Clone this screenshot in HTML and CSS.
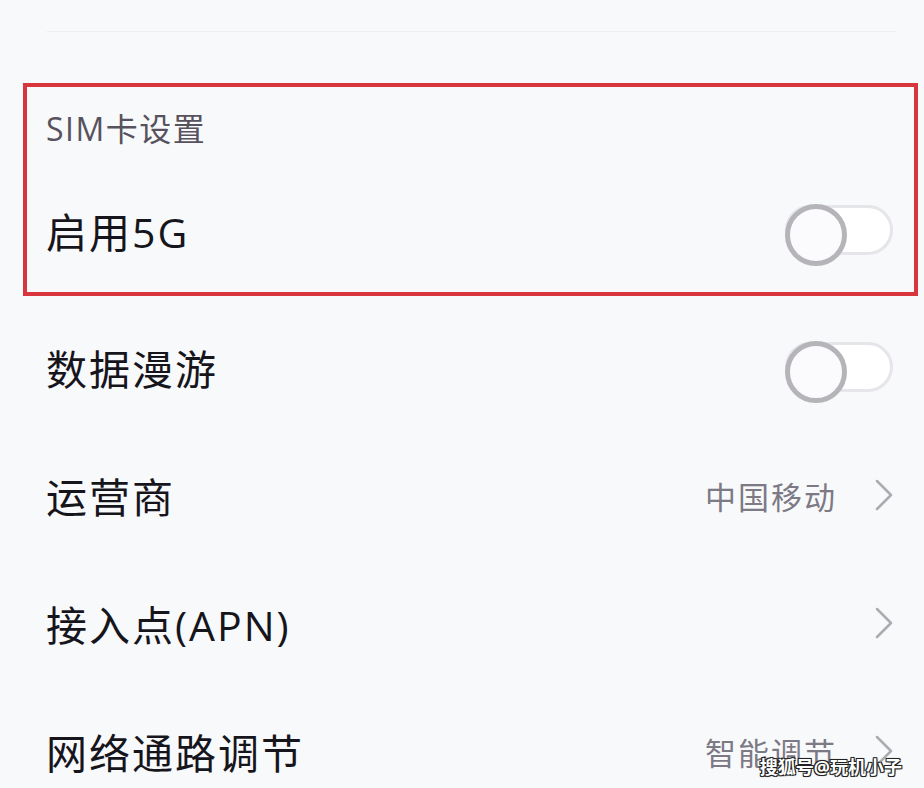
FILE: index.html
```html
<!DOCTYPE html>
<html lang="zh-CN">
<head>
  <meta charset="UTF-8"/>
  <meta name="viewport" content="width=device-width,initial-scale=1"/>
  <title>SIM卡设置</title>
  <link rel="stylesheet" href="styles.css">
</head>
<body>

<div class="page">
  <div class="top"></div>

  <!-- SIM card group (highlighted) -->
  <section class="sim">
    <div class="sim-title">SIM卡设置</div>
    <div class="row">
      <span class="label">启用5G</span>
      <span class="switch"></span>
    </div>
  </section>

  <!-- other settings -->
  <section class="list">
    <div class="row">
      <span class="label">数据漫游</span>
      <span class="switch"></span>
    </div>
    <div class="row">
      <span class="label">运营商</span>
      <span class="side">
        <span class="value">中国移动</span>
        <svg class="chev" width="18" height="32" viewBox="0 0 18 32"><path d="M2 2 L16 16 L2 30" fill="none" stroke="#ababb1" stroke-width="2.5" stroke-linecap="round" stroke-linejoin="round"/></svg>
      </span>
    </div>
    <div class="row">
      <span class="label">接入点(APN)</span>
      <span class="side">
        <svg class="chev" width="18" height="32" viewBox="0 0 18 32"><path d="M2 2 L16 16 L2 30" fill="none" stroke="#ababb1" stroke-width="2.5" stroke-linecap="round" stroke-linejoin="round"/></svg>
      </span>
    </div>
    <div class="row">
      <span class="label">网络通路调节</span>
      <span class="side">
        <span class="value">智能调节</span>
        <svg class="chev" width="18" height="32" viewBox="0 0 18 32"><path d="M2 2 L16 16 L2 30" fill="none" stroke="#ababb1" stroke-width="2.5" stroke-linecap="round" stroke-linejoin="round"/></svg>
      </span>
    </div>
  </section>
</div>

<div class="mark">搜狐号@玩机小子</div>

</body>
</html>
```

FILE: styles.css
```css
*{box-sizing:border-box}
html,body{margin:0;height:100%;overflow:hidden}
body{background:#f8f9fb;color:#1d1b22;font-family:"Open Sans","Noto Sans CJK SC",sans-serif;position:relative}
.page{padding:0 6px 0 23px}
.top{height:32px;border-bottom:1px solid #eceef3;margin:0 22px 0 24px}

.sim{margin-top:51px;border:4px solid #d9353d;padding:0 21px 0 19px}
.sim-title{height:80px;display:flex;align-items:center;font-size:32px;letter-spacing:1.5px;color:#57525d}
.sim .row{height:125px;padding:0}

.list{margin-top:7px}
.row{height:128px;display:flex;align-items:center;justify-content:space-between;padding:0 25px 0 23px}
.label{font-size:41px;letter-spacing:2px;color:#17151c}
.side{display:flex;align-items:center;gap:38px}
.value{font-size:31px;letter-spacing:2px;color:#7d7985}
.chev{display:block}

.switch{position:relative;width:108px;height:50px;border:3px solid #e5e5ea;border-radius:25px;background:#fff}
.switch::before{content:"";position:absolute;left:-3px;top:-4px;width:52px;height:52px;border-radius:50%;border:5px solid #b4b4b9;background:#fbfbfd}

.mark{position:absolute;right:22px;bottom:9px;font-size:18px;font-weight:700;color:#fff;letter-spacing:0;
  text-shadow:-1px -1px 0 #222,1px -1px 0 #222,-1px 1px 0 #222,1px 1px 0 #222,0 0 2px #000}
```
